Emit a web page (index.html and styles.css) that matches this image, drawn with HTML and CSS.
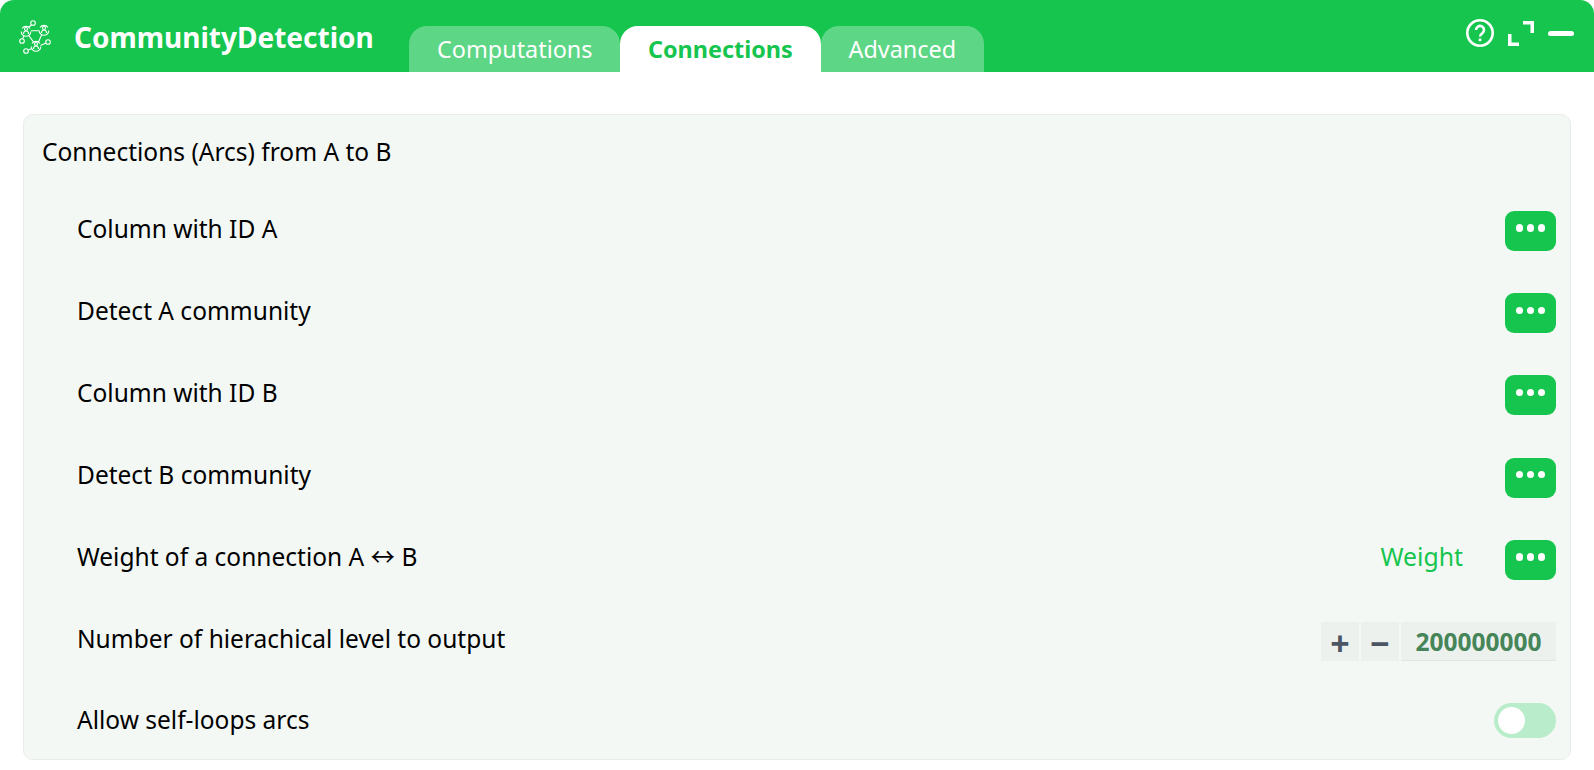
FILE: index.html
```html
<!DOCTYPE html>
<html>
<head lang="en">
    <meta charset="UTF-8">
    <title>CommunityDetection</title>
    <link rel="stylesheet" href="styles.css">
</head>
<body>
<div class="header">
    <div class="logo">
        <svg width="34" height="36" viewBox="0 0 34 36" fill="none" stroke="#fff" stroke-width="1.100">
            <path d="M12 11.800H20M9.500 16.200L14.500 23M22.800 15.400L19.500 23"/>
            <path d="M3 9.500a4.800 4.800 0 0 1 8 0M2.200 12.500a4.800 4.800 0 0 0 9.600 0"/>
            <path d="M21 8.500a4.800 4.800 0 0 1 8 0M20.200 11.500a4.800 4.800 0 0 0 9.600 0"/>
            <path d="M13 24.500a4.800 4.800 0 0 1 8 0M12.200 27.500a4.800 4.800 0 0 0 9.600 0"/>
            <path d="M4.500 15c0-2 1-3 2.500-3s2.500 1 2.500 3M22.500 14c0-2 1-3 2.500-3s2.500 1 2.500 3M14.500 30c0-2 1-3 2.500-3s2.500 1 2.500 3"/>
            <circle cx="7" cy="10" r="1.500"/>
            <circle cx="25" cy="9" r="1.500"/>
            <circle cx="17" cy="25" r="1.500"/>
            <circle cx="14" cy="4" r="2.300"/>
            <circle cx="3" cy="22" r="2.300"/>
            <circle cx="29" cy="23" r="2.300"/>
            <circle cx="7" cy="32" r="2.300"/>
            <path d="M12.500 6L10 8M3.500 19.700L5 17M26.800 24L21.500 26.500M9 31L13 29.500"/>
        </svg>
    </div>
    <div class="app-name">CommunityDetection</div>
    <div class="tabs">
        <a class="tab">Computations</a>
        <a class="tab active">Connections</a>
        <a class="tab">Advanced</a>
    </div>
    <div class="win-icons">
        <svg width="28" height="28" viewBox="0 0 28 28" fill="none" stroke="#fff" stroke-width="2.600">
            <circle cx="14" cy="14" r="12.700"/>
            <path d="M10 11a4 4 0 1 1 6.200 3.300c-1.500 1-2.200 1.500-2.200 3.200"/>
            <path d="M14 19.500v2.700"/>
        </svg>
        <svg width="26" height="25" viewBox="0 0 26 25" fill="none" stroke="#fff" stroke-width="3.500">
            <path d="M15 1.750H24.250V12M1.750 13V23.250H11"/>
        </svg>
        <svg width="26" height="5" viewBox="0 0 26 5"><rect width="26" height="5" rx="2.500" fill="#fff"/></svg>
    </div>
</div>
<div class="content">
    <div class="panel">
        <div class="panel-title">Connections (Arcs) from A to B</div>
        <div class="row">
            <div class="label">Column with ID A</div>
            <a class="more"><i></i><i></i><i></i></a>
        </div>
        <div class="row">
            <div class="label">Detect A community</div>
            <a class="more"><i></i><i></i><i></i></a>
        </div>
        <div class="row">
            <div class="label">Column with ID B</div>
            <a class="more"><i></i><i></i><i></i></a>
        </div>
        <div class="row">
            <div class="label">Detect B community</div>
            <a class="more"><i></i><i></i><i></i></a>
        </div>
        <div class="row">
            <div class="label">Weight of a connection A <span class="arrow">↔</span> B</div>
            <div class="value">Weight</div>
            <a class="more"><i></i><i></i><i></i></a>
        </div>
        <div class="row number-row">
            <div class="label">Number of hierachical level to output</div>
            <div class="stepper">
                <a class="step">+</a>
                <a class="step">−</a>
                <div class="num">200000000</div>
            </div>
        </div>
        <div class="row last">
            <div class="label">Allow self-loops arcs</div>
            <div class="toggle"><span></span></div>
        </div>
    </div>
</div>
</body>
</html>
```

FILE: styles.css
```css
* {
    margin: 0;
    padding: 0;
    box-sizing: border-box;
}

body {
    font-family: "Noto Sans", sans-serif;
    font-size: 24.5px;
    color: #000;
    background-color: #fff;
    overflow: hidden;
}

.header {
    height: 72px;
    background-color: #15c54e;
    display: flex;
    align-items: flex-start;
    color: #fff;
    border-radius: 14px 14px 0 0;
}

.logo {
    width: 74px;
    padding: 19px 0 0 19px;
    height: 72px;
}

.app-name {
    width: 335px;
    font-size: 28px;
    font-weight: 700;
    line-height: 38px;
    padding-top: 18px;
}

.tabs {
    display: flex;
    align-self: flex-end;
}

.tab {
    display: block;
    height: 46px;
    line-height: 46px;
    padding: 0 27.8px;
    font-size: 23.4px;
    background-color: #5dd685;
    border-radius: 18px 18px 0 0;
    color: #fff;
}

.tab:first-child {
    padding: 0 27.6px 0 28px;
}

.tab:last-child {
    padding: 0 28px;
}

.tab.active {
    background-color: #fff;
    color: #15c54e;
    font-weight: 700;
}

.win-icons {
    margin-left: auto;
    display: flex;
    align-items: center;
    gap: 14px;
    padding: 19px 20px 0 0;
}

.content {
    padding: 42px 23px 0 23px;
}

.panel {
    height: 646px;
    background-color: #f4f8f5;
    border: 1px solid #e8ecea;
    border-radius: 10px;
    padding: 0 14px 0 18px;
}

.panel-title {
    height: 75px;
    line-height: 74px;
}

.row {
    height: 82.2px;
    display: flex;
    align-items: center;
    padding-left: 35px;
}

.row.last {
    height: 75px;
}

.label {
    flex: 1;
    line-height: 33px;
    padding-bottom: 6px;
}

.number-row .label {
    padding-bottom: 8px;
}

.row.last .label {
    padding-bottom: 2px;
}

.arrow {
    font-family: "Noto Sans CJK SC", sans-serif;
    line-height: 1;
}

.value {
    color: #15c54e;
    font-size: 24.8px;
    line-height: 33px;
    margin-right: 42px;
    padding-bottom: 6px;
}

.more {
    width: 51px;
    height: 40px;
    background-color: #15c54e;
    border-radius: 9px;
    display: flex;
    justify-content: center;
    align-items: center;
    gap: 3.3px;
    padding-bottom: 6px;
}

.more i {
    display: block;
    width: 7.5px;
    height: 7.5px;
    border-radius: 50%;
    background-color: #fff;
}

.stepper {
    display: flex;
    gap: 2px;
    height: 39px;
    margin-bottom: 2px;
}

.step {
    width: 38px;
    background-color: #edf1ee;
    color: #4b5563;
    font-size: 34px;
    font-weight: 700;
    line-height: 42px;
    text-align: center;
}

.num {
    width: 155px;
    background-color: #edf1ee;
    border-bottom: 1px solid #dde8e2;
    color: #458559;
    font-weight: 700;
    line-height: 39px;
    text-align: center;
}

.toggle {
    width: 62px;
    height: 35px;
    border-radius: 18px;
    background-color: #b9ecca;
    padding: 4px;
}

.toggle span {
    display: block;
    width: 27px;
    height: 27px;
    border-radius: 50%;
    background-color: #fff;
}
```
